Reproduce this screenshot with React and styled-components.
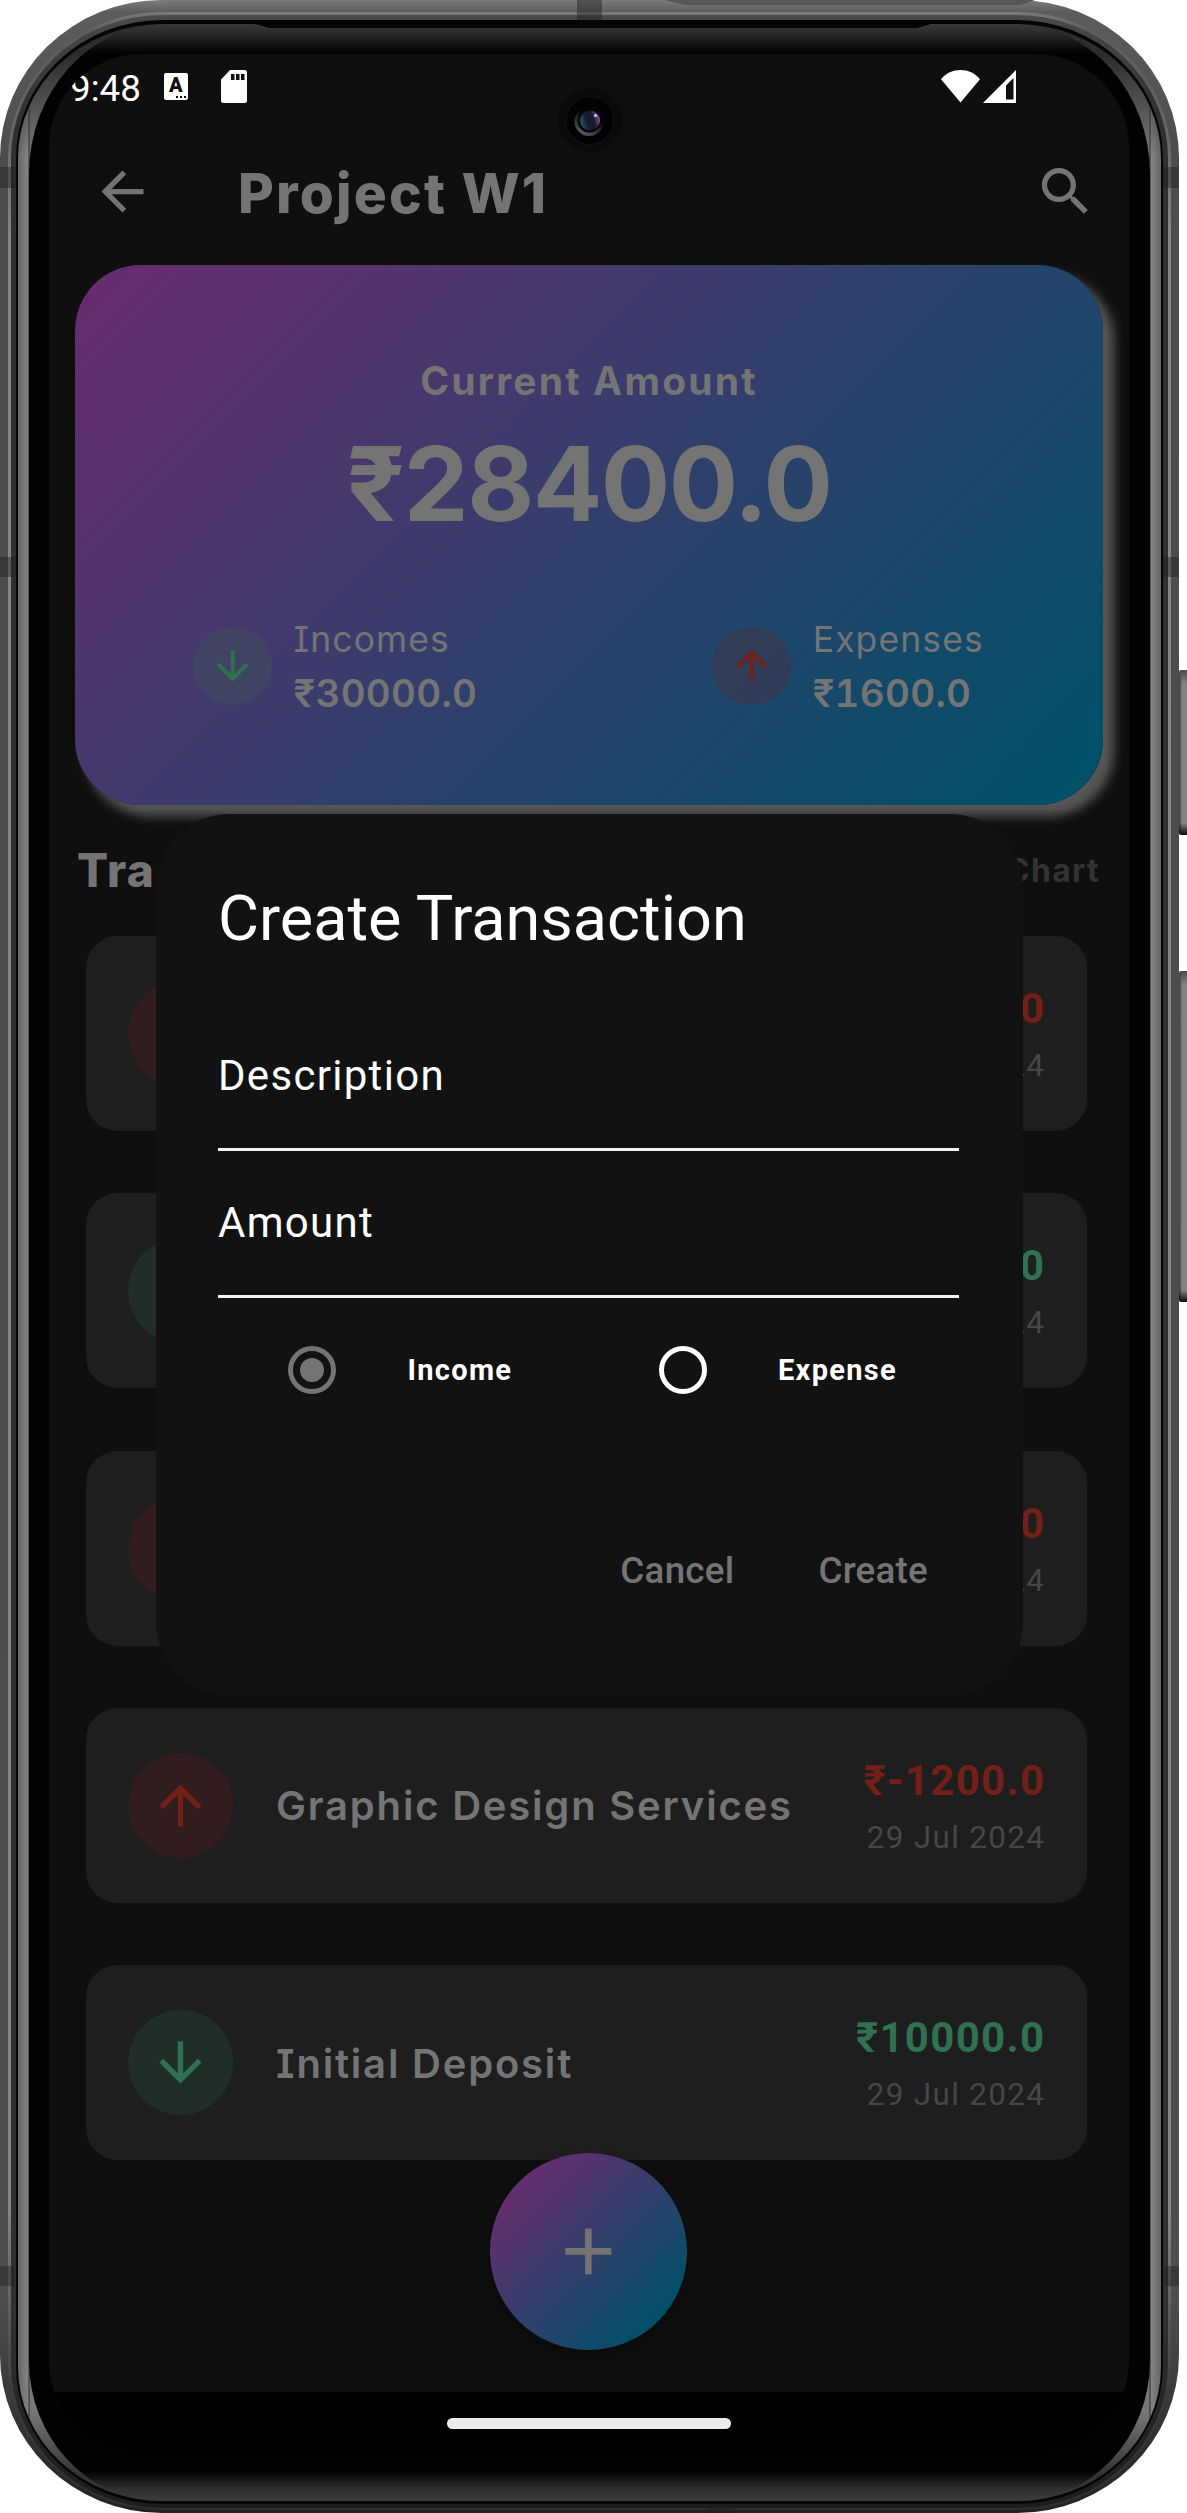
import React from "react";
import styled, { createGlobalStyle, css } from "styled-components";

const GlobalStyle = createGlobalStyle`
  html, body { margin: 0; padding: 0; background: #fff; }
  body { width: 1187px; height: 2513px; overflow: hidden; }
  *, *::before, *::after { box-sizing: border-box; }
`;

const grotesk = `Inter, "Liberation Sans", sans-serif`;
const roboto = `Roboto, "Noto Sans", sans-serif`;
const muted = "#747474";
const tones = {
  income: { ink: "#2f7150", disc: "#212e28" },
  expense: { ink: "#73201a", disc: "#311d1e" },
};

/* ---------- device ---------- */
const Device = styled.div`
  position: relative;
  width: 1187px;
  height: 2513px;
`;

const Rim = styled.div`
  width: 1179px;
  height: 2513px;
  padding: 12px 8px 3px;
  border-radius: 162px / 158px;
  background: linear-gradient(180deg, #7c7c7c 0, #5c5c5c 12px, #4c4c4c 160px, #4e4e4e 2300px, #303030 2440px, #222 100%);
`;

const RimHighlight = styled.div`
  height: 100%;
  padding: 3px 3px 2px;
  border-radius: 154px / 146px;
  background: linear-gradient(180deg, #7a7a7a 0, #5c5c5c 20px, #666 120px, #858585 220px, #858585 2200px, #3c3c3c 2380px, #2e2e2e 100%);
`;

const RimShade = styled.div`
  height: 100%;
  padding: 5px 5px 4px;
  border-radius: 151px / 143px;
  background: linear-gradient(180deg, #4a4a4a 0, #303030 100px, #303030 2300px, #1c1c1c 100%);
`;

const Seam = styled.div`
  height: 100%;
  padding: 4px 2px 3px;
  border-radius: 146px / 138px;
  background: #050505;
`;

const Chamfer = styled.div`
  position: relative;
  height: 100%;
  padding: 0 11px;
  border-radius: 144px / 134px;
  overflow: hidden;
  background:
    linear-gradient(180deg, #2c2c2c 0, #2c2c2c 30px, rgba(44, 44, 44, 0) 130px, rgba(50, 50, 50, 0) calc(100% - 90px), #323232 calc(100% - 25px), #3a3a3a 100%),
    linear-gradient(90deg, #666 0, #848484 10px, #2a2a2a 11px, #777 12px, #777 calc(100% - 12px), #2a2a2a calc(100% - 11px), #848484 calc(100% - 10px), #666 100%);
`;

const Glass = styled.div`
  position: relative;
  height: 100%;
  padding: 30px 21px 47px 20px;
  border-radius: 136px 136px 132px 132px / 150px 150px 140px 140px;
  background: linear-gradient(180deg, #3a3a3a 0, #202020 14px, #020202 29px, #020202 calc(100% - 30px), #303030 calc(100% - 12px), #3c3c3c 100%);
`;

const Earpiece = styled.div`
  position: absolute;
  top: 0;
  left: 226px;
  width: 676px;
  height: 4px;
  background: #040404;
  clip-path: polygon(0 0, 100% 0, calc(100% - 14px) 100%, 14px 100%);
`;

const Band = styled.div`
  position: absolute;
  left: ${(p) => p.$x}px;
  top: ${(p) => p.$y}px;
  width: ${(p) => p.$w}px;
  height: ${(p) => p.$h}px;
  background: rgba(28, 28, 28, 0.42);
`;

const TopPlate = styled.div`
  position: absolute;
  left: 665px;
  top: 0;
  width: 370px;
  height: 5px;
  background: #565656;
  clip-path: polygon(0 0, 100% 0, calc(100% - 14px) 100%, 20px 100%);
`;

const SideButton = styled.div`
  position: absolute;
  left: 1179px;
  top: ${(p) => p.$y}px;
  width: 8px;
  height: ${(p) => p.$h}px;
  border-radius: 2px 0 0 2px;
  background:
    linear-gradient(180deg, #4a4a4a 0, rgba(74, 74, 74, 0) 14px, rgba(0, 0, 0, 0) calc(100% - 12px), #0c0c0c 100%),
    linear-gradient(90deg, #3a3a3a 0, #808080 3px, #868686 100%);
`;

/* ---------- screen ---------- */
const Screen = styled.div`
  position: relative;
  height: 2400px;
  width: 1080px;
  border-radius: 93px;
  overflow: hidden;
  background: #0f0f0f;
  display: flex;
  flex-direction: column;
  font-family: ${grotesk};
  color: ${muted};
`;

const StatusBar = styled.div`
  flex: none;
  height: 64px;
  padding: 1px 113px 0 21px;
  display: flex;
  align-items: center;
  color: #fff;
`;

const Clock = styled.span`
  font: 400 36.75px/56px ${roboto};
  margin-top: 5px;
  margin-right: 23px;
`;

const StatusSpacer = styled.div`
  flex: 1;
`;

const LangGlyph = styled.span`
  width: 24px;
  height: 27px;
  border-radius: 2px;
  background: #fff;
  color: #0f0f0f;
  font: 900 20px/25px ${roboto};
  text-align: center;
  position: relative;
  margin-right: 33px;
  &::after {
    content: "";
    position: absolute;
    right: 2px;
    bottom: 2px;
    width: 10px;
    height: 2px;
    background: repeating-linear-gradient(90deg, #0f0f0f 0 2px, #fff 2px 4px);
  }
`;

const AppBar = styled.header`
  flex: none;
  height: 147px;
  padding: 0 32px 0 42px;
  display: flex;
  align-items: center;
`;

const AppTitle = styled.h1`
  flex: 1;
  margin: 0 0 0 84px;
  padding-top: 2px;
  font: 800 55px/70px ${grotesk};
  letter-spacing: 2.2px;
`;

const Icon = styled.svg`
  display: block;
  flex: none;
  width: ${(p) => p.$size}px;
  height: ${(p) => p.$size}px;
  fill: currentColor;
`;

const BalanceCard = styled.section`
  flex: none;
  height: 540px;
  margin: 0 26.25px;
  padding-top: 91px;
  border-radius: 65.6px;
  background: linear-gradient(135deg, #652d6f 3.7%, #005068 96.3%);
  box-shadow: 10.5px 10.5px 11px #585858;
`;

const BalanceLabel = styled.div`
  padding-top: 1px;
  font: 700 39px/48px ${grotesk};
  letter-spacing: 2.2px;
  text-align: center;
`;

const BalanceValue = styled.div`
  margin-top: 19px;
  font: 700 103px/120px ${grotesk};
  letter-spacing: -1.5px;
  text-align: center;
`;

const Stats = styled.div`
  margin: 68px 0 0 117.5px;
  display: grid;
  grid-template-columns: 519.2px 1fr;
`;

const Stat = styled.div`
  display: flex;
  align-items: center;
`;

const StatDisc = styled.div`
  width: 78.75px;
  height: 78.75px;
  margin-right: 22px;
  border-radius: 50%;
  display: grid;
  place-items: center;
  color: ${(p) => tones[p.$tone].ink};
  background: ${(p) => (p.$tone === "income" ? "rgba(64,76,92,.6)" : "rgba(54,58,82,.8)")};
`;

const StatName = styled.div`
  padding-top: 1px;
  font: 400 35.5px/54px ${grotesk};
  font-feature-settings: "cv08";
  letter-spacing: 1.1px;
`;

const StatValue = styled.div`
  margin-top: -1px;
  font: 600 38.5px/54px ${grotesk};
  font-variant-numeric: tabular-nums;
  letter-spacing: 0.3px;
`;

const SectionHead = styled.div`
  flex: none;
  height: 131px;
  padding: 0 29px 2px 28px;
  display: flex;
  align-items: center;
  justify-content: space-between;
`;

const SectionTitle = styled.h2`
  margin: 0;
  font: 800 46px/56px ${grotesk};
  letter-spacing: 1.4px;
`;

const ChartLink = styled.a`
  padding-top: 2px;
  font: 700 32px/40px ${grotesk};
  letter-spacing: 1.3px;
  color: #333;
`;

const List = styled.div`
  flex: 1;
  padding: 0 42px 0 37px;
  display: flex;
  flex-direction: column;
  gap: 62.25px;
`;

const Row = styled.article`
  flex: none;
  height: 195px;
  padding: 0 41.7px 0 42px;
  border-radius: 31.5px;
  background: #1e1e1e;
  display: flex;
  align-items: center;
`;

const RowDisc = styled.div`
  flex: none;
  width: 105px;
  height: 105px;
  border-radius: 50%;
  display: grid;
  place-items: center;
  color: ${(p) => tones[p.$tone].ink};
  background: ${(p) => tones[p.$tone].disc};
`;

const RowTitle = styled.div`
  flex: 1;
  min-width: 0;
  margin-left: 43px;
  padding-top: 2px;
  white-space: nowrap;
  font: 600 40px/50px ${grotesk};
  font-feature-settings: "cv08";
  letter-spacing: 1.8px;
`;

const RowMeta = styled.div`
  flex: none;
  padding-top: 5px;
  text-align: right;
`;

const RowAmount = styled.div`
  font: 700 42px/60px ${roboto};
  letter-spacing: 1.3px;
  color: ${(p) => tones[p.$tone].ink};
`;

const RowDate = styled.div`
  font: 400 31.5px/54px ${roboto};
  letter-spacing: 1.3px;
  color: #474747;
`;

const NavBar = styled.div`
  flex: none;
  height: 62px;
  background: #000;
  display: flex;
  justify-content: center;
  padding-top: 26px;
`;

const NavHandle = styled.div`
  width: 284px;
  height: 11px;
  border-radius: 6px;
  background: #ececec;
`;

/* ---------- overlays ---------- */
const Camera = styled.svg`
  position: absolute;
  left: 509px;
  top: 34px;
  width: 64px;
  height: 64px;
`;

const Fab = styled.button`
  position: absolute;
  left: 441px;
  top: 2099px;
  width: 197px;
  height: 197px;
  padding: 0;
  border: 0;
  border-radius: 50%;
  display: grid;
  place-items: center;
  color: ${muted};
  background: linear-gradient(135deg, #652d6f 14.6%, #005068 85.4%);
  box-shadow: 0 6px 16px rgba(0, 0, 0, 0.35);
`;

const Dialog = styled.div`
  position: absolute;
  left: 106.5px;
  top: 760px;
  width: 867px;
  height: 882px;
  padding: 63px 63.5px 0 62.5px;
  border-radius: 73.5px;
  background: #121212;
  color: #fff;
  font-family: ${roboto};
`;

const DialogTitle = styled.h2`
  margin: 0 0 43px;
  font: 400 63px/84px ${roboto};
`;

const Field = styled.div`
  height: 147px;
  border-bottom: 3px solid #f4f4f4;
  display: flex;
  align-items: center;
  font-size: 42px;
  line-height: 56px;
  letter-spacing: 1.3px;
`;

const Choices = styled.div`
  height: 144px;
  display: grid;
  grid-template-columns: 1fr 1fr;
`;

const Choice = styled.div`
  display: flex;
  align-items: center;
  padding-left: 70px;
  font-size: 29px;
  font-weight: 700;
  letter-spacing: 1.3px;
`;

const Radio = styled.span`
  width: 48px;
  height: 48px;
  margin-right: 71.5px;
  border: 5.25px solid ${(p) => (p.$on ? muted : "#fff")};
  border-radius: 50%;
  display: grid;
  place-items: center;
  ${(p) =>
    p.$on &&
    css`
      &::after {
        content: "";
        width: 24px;
        height: 24px;
        border-radius: 50%;
        background: ${muted};
      }
    `}
`;

const Actions = styled.div`
  height: 105px;
  margin: 76px 31px 0 0;
  display: flex;
  align-items: center;
  justify-content: flex-end;
  gap: 84px;
`;

const TextButton = styled.button`
  padding: 0;
  border: 0;
  background: none;
  color: ${muted};
  font: 500 36.75px/50px ${roboto};
  letter-spacing: 0.26px;
`;

const paths = {
  back: "M20 11H7.83l5.59-5.59L12 4l-8 8 8 8 1.41-1.41L7.83 13H20v-2z",
  search:
    "M15.5 14h-.79l-.28-.27C15.41 12.59 16 11.11 16 9.5 16 5.91 13.09 3 9.5 3S3 5.91 3 9.5 5.91 16 9.5 16c1.61 0 3.09-.59 4.23-1.57l.27.28v.79l5 4.99L20.49 19l-4.99-5zm-6 0C7.01 14 5 11.99 5 9.5S7.01 5 9.5 5 14 7.01 14 9.5 11.99 14 9.5 14z",
  income: "M20 12l-1.41-1.41L13 16.17V4h-2v12.17l-5.58-5.59L4 12l8 8 8-8z",
  expense: "M4 12l1.41 1.41L11 7.83V20h2V7.83l5.58 5.59L20 12l-8-8-8 8z",
  plus: "M19 13h-6v6h-2v-6H5v-2h6V5h2v6h6v2z",
};

const Glyph = ({ name, size }) => (
  <Icon $size={size} viewBox="0 0 24 24">
    <path d={paths[name]} />
  </Icon>
);

const stats = [
  { tone: "income", name: "Incomes", value: "₹30000.0" },
  { tone: "expense", name: "Expenses", value: "₹1600.0" },
];

const transactions = [
  { tone: "expense", amount: "0" },
  { tone: "income", amount: "0" },
  { tone: "expense", amount: "0" },
  { tone: "expense", title: "Graphic Design Services", amount: "₹-1200.0" },
  { tone: "income", title: "Initial Deposit", amount: "₹10000.0" },
];

const bands = [
  [0, 167, 16, 21],
  [1163, 167, 16, 21],
  [0, 557, 16, 20],
  [1163, 557, 16, 20],
  [0, 2266, 15, 20],
  [1164, 2266, 15, 20],
  [577, 0, 25, 20],
  [709, 2504, 26, 9],
];

export default function App() {
  return (
    <Device>
      <GlobalStyle />
      <Rim>
        <RimHighlight>
          <RimShade>
            <Seam>
              <Chamfer>
                <Glass>
                  <Earpiece />
                  <Screen>
                    <StatusBar>
                      <Clock>9:48</Clock>
                      <LangGlyph>A</LangGlyph>
                      <svg width="26" height="33" viewBox="0 0 26 33">
                        <path fill="#fff" d="M9 0H23.500a2.500 2.500 0 0 1 2.500 2.500V30.500a2.500 2.500 0 0 1-2.500 2.500H2.500A2.500 2.500 0 0 1 0 30.500V9.500z" />
                        <path fill="#0f0f0f" d="M10 4h3.500v6H10zM15 4h3.500v6H15zM20 4h3.500v6H20z" />
                      </svg>
                      <StatusSpacer />
                      <svg width="75" height="33" viewBox="0 0 75 33">
                        <path fill="#fff" d="M0 9.200C10-3 29-3 39 9.200L19.500 32.500z" />
                        <path fill="#fff" fillRule="evenodd" d="M75 0V33H42zM72.500 8L65 15.500V29.500H72.500z" />
                      </svg>
                    </StatusBar>
                    <AppBar>
                      <Glyph name="back" size={63} />
                      <AppTitle>Project W1</AppTitle>
                      <Glyph name="search" size={63} />
                    </AppBar>
                    <BalanceCard>
                      <BalanceLabel>Current Amount</BalanceLabel>
                      <BalanceValue>₹28400.0</BalanceValue>
                      <Stats>
                        {stats.map((s) => (
                          <Stat key={s.name}>
                            <StatDisc $tone={s.tone}>
                              <Glyph name={s.tone} size={47.25} />
                            </StatDisc>
                            <div>
                              <StatName>{s.name}</StatName>
                              <StatValue>{s.value}</StatValue>
                            </div>
                          </Stat>
                        ))}
                      </Stats>
                    </BalanceCard>
                    <SectionHead>
                      <SectionTitle>Tra</SectionTitle>
                      <ChartLink>Chart</ChartLink>
                    </SectionHead>
                    <List>
                      {transactions.map((t, i) => (
                        <Row key={i}>
                          <RowDisc $tone={t.tone}>
                            <Glyph name={t.tone} size={63} />
                          </RowDisc>
                          <RowTitle>{t.title}</RowTitle>
                          <RowMeta>
                            <RowAmount $tone={t.tone}>{t.amount}</RowAmount>
                            <RowDate>{t.title ? "29 Jul 2024" : "24"}</RowDate>
                          </RowMeta>
                        </Row>
                      ))}
                    </List>
                    <NavBar>
                      <NavHandle />
                    </NavBar>
                    <Fab>
                      <Glyph name="plus" size={78.75} />
                    </Fab>
                    <Dialog>
                      <DialogTitle>Create Transaction</DialogTitle>
                      <Field>Description</Field>
                      <Field>Amount</Field>
                      <Choices>
                        <Choice>
                          <Radio $on />
                          Income
                        </Choice>
                        <Choice>
                          <Radio />
                          Expense
                        </Choice>
                      </Choices>
                      <Actions>
                        <TextButton>Cancel</TextButton>
                        <TextButton>Create</TextButton>
                      </Actions>
                    </Dialog>
                    <Camera viewBox="0 0 64 64">
                      <defs>
                        <linearGradient id="lens" x1="0" y1="0.6" x2="1" y2="0.3">
                          <stop offset="0" stopColor="#255a72" />
                          <stop offset="0.35" stopColor="#141a2c" />
                          <stop offset="0.65" stopColor="#1c1830" />
                          <stop offset="1" stopColor="#8a5fa0" />
                        </linearGradient>
                        <linearGradient id="ring" x1="0.8" y1="0" x2="0.3" y2="1">
                          <stop offset="0.35" stopColor="#060606" />
                          <stop offset="1" stopColor="#5c5c5c" />
                        </linearGradient>
                      </defs>
                      <circle cx="32" cy="32" r="32" fill="#0a0a0a" />
                      <circle cx="32" cy="32.500" r="24" fill="#020202" stroke="#141414" />
                      <circle cx="31" cy="33.500" r="14.500" fill="url(#ring)" />
                      <circle cx="31.500" cy="32.500" r="12" fill="#050508" />
                      <circle cx="32" cy="32.500" r="10" fill="url(#lens)" />
                      <circle cx="37.500" cy="27.500" r="1.600" fill="#d9b8ea" />
                    </Camera>
                  </Screen>
                </Glass>
              </Chamfer>
            </Seam>
          </RimShade>
        </RimHighlight>
      </Rim>
      {bands.map(([x, y, w, h]) => (
        <Band key={`${x}-${y}`} $x={x} $y={y} $w={w} $h={h} />
      ))}
      <TopPlate />
      <SideButton $y={670} $h={165} />
      <SideButton $y={971} $h={331} />
    </Device>
  );
}
